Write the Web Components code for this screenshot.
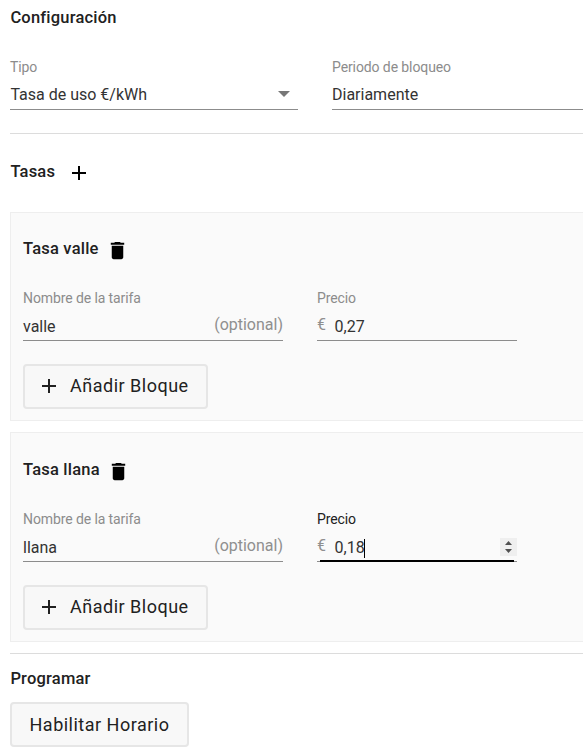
<!DOCTYPE html>
<html lang="es">
<head>
<meta charset="utf-8">
<title>Configuración</title>
<style>
body { margin: 0; background: #fff; color: #333; font: 16px/20px Roboto, "Liberation Sans", sans-serif; overflow: hidden; }
</style>
</head>
<body>
<tariff-page></tariff-page>
<script>
const define = (name, html) => customElements.define(name, class extends HTMLElement {
  connectedCallback() {
    if (this.shadowRoot) return;
    const t = document.createElement('template');
    t.innerHTML = html;
    this.attachShadow({ mode: 'open' }).append(t.content.cloneNode(true));
  }
});

define('ui-icon-plus', `<style>:host{display:block;width:24px;height:24px}svg{display:block}</style>
<svg width="24" height="24" viewBox="0 0 24 24"><path fill="currentColor" d="M19 13h-6v6h-2v-6H5v-2h6V5h2v6h6z"/></svg>`);

define('ui-icon-trash', `<style>:host{display:block;width:23px;height:23px;color:#000}svg{display:block}</style>
<svg width="23" height="23" viewBox="0 0 24 24"><path fill="currentColor" d="M6 19c0 1.100.9 2 2 2h8c1.100 0 2-.9 2-2V7H6v12zM19 4h-3.500l-1-1h-5l-1 1H5v2h14z"/></svg>`);

define('ui-heading', `<style>
:host{display:flex;align-items:flex-start;height:24px;font-weight:500;font-size:16.500px;line-height:20px;letter-spacing:.2px;white-space:nowrap;color:#212121;padding-left:var(--inset,0)}
::slotted([slot=action]){margin-left:var(--gap,12px);margin-top:var(--drop,0)}
</style><slot></slot><slot name="action"></slot>`);

define('ui-divider', `<style>:host{display:block;height:1px;background:#dcdcdc}</style>`);

define('ui-button', `<style>
:host{display:flex;width:max-content}
button{box-sizing:border-box;height:45px;width:var(--w);display:flex;align-items:center;justify-content:flex-start;margin:0;padding:0 0 var(--lift,2px) 17.500px;border:2px solid #e6e6e6;border-radius:4px;background:#f8f8f8;color:#212121;font:18px/24px Roboto,"Liberation Sans",sans-serif;letter-spacing:.5px;white-space:nowrap}
::slotted([slot=icon]){margin:0 9px 0 -5.500px}
</style><button type="button"><slot name="icon"></slot><slot></slot></button>`);

define('ui-field', `<style>
:host{display:flex;flex-direction:column;box-sizing:border-box;height:53px;min-width:0}
label{font-size:14px;line-height:20px;letter-spacing:-.1px;color:var(--label,#8c8c8c);white-space:nowrap}
.row{flex:1;display:flex;align-items:flex-end;border-bottom:1px solid #8c8c8c;position:relative;white-space:nowrap}
.value{display:flex;align-items:center;line-height:20px;padding-bottom:var(--vb,3px);flex:1}
::slotted([slot=prefix]),::slotted([slot=suffix]){color:#8f8f8f;padding-bottom:5px;line-height:20px}
::slotted([slot=prefix]){width:17.500px}
.focus{display:none;position:absolute;left:3px;right:3px;bottom:-1px;height:2px;background:#000}
:host([focused]){--label:#212121}
:host([focused]) .focus{display:block}
</style>
<label><slot name="label"></slot></label>
<div class="row"><slot name="prefix"></slot><div class="value"><slot></slot></div><slot name="suffix"></slot><i class="focus"></i></div>`);

define('ui-arrow', `<style>:host{display:block;padding:0 8px 13px 0}svg{display:block}</style>
<svg width="12" height="6" viewBox="0 0 12 6"><path fill="#777" d="M0 0h12L6 6z"/></svg>`);

define('ui-caret', `<style>:host{display:block;width:1px;height:19px;background:#000;margin-left:-1px}</style>`);

define('ui-spinner', `<style>:host{display:block;width:17px;height:18px;background:#efefef;margin-bottom:5px}svg{display:block}</style>
<svg width="17" height="18" viewBox="0 0 17 18"><path fill="#505050" d="M5 7l3.500-4L12 7zM5 11h7l-3.500 4z"/></svg>`);

define('tariff-card', `<style>
:host{display:block;box-sizing:border-box;height:209px;border:1px solid #eee;border-right:0;background:#fafafa;padding:26px 0 0 12px}
:host([shifted]){height:210px;padding-top:27px}
.fields{display:grid;grid-template-columns:260px 200px;column-gap:34px;margin-top:25px}
.add{margin-top:23px}
ui-heading{--gap:7px}
</style>
<ui-heading><slot name="title"></slot><ui-icon-trash slot="action"></ui-icon-trash></ui-heading>
<div class="fields"><slot></slot></div>
<ui-button class="add" style="--w:185px"><ui-icon-plus slot="icon"></ui-icon-plus>Añadir Bloque</ui-button>`);

define('tariff-page', `<style>
:host{display:block;padding:8px 0 0 10px}
ui-heading{--inset:.4px}
.top{display:grid;grid-template-columns:288px minmax(0,1fr);column-gap:34px;margin:25px 0 23px}
.top ui-field{--vb:4px}
.rates{margin-top:28px;--drop:-1px}
.cards{display:grid;gap:11px;margin-top:26px}
.program{margin-top:15px}
.schedule{margin-top:9px;--lift:0}
</style>
<ui-heading>Configuración</ui-heading>
<div class="top">
<ui-field><span slot="label">Tipo</span><span style="padding-left:.4px">Tasa de uso €/kWh</span><ui-arrow slot="suffix" style="padding-bottom:12px"></ui-arrow></ui-field>
<ui-field><span slot="label">Periodo de bloqueo</span>Diariamente</ui-field>
</div>
<ui-divider></ui-divider>
<ui-heading class="rates">Tasas<ui-icon-plus slot="action" style="color:#000"></ui-icon-plus></ui-heading>
<div class="cards">
<tariff-card><span slot="title">Tasa valle</span>
<ui-field><span slot="label">Nombre de la tarifa</span>valle<span slot="suffix">(optional)</span></ui-field>
<ui-field><span slot="label">Precio</span><span slot="prefix">€</span>0,27</ui-field>
</tariff-card>
<tariff-card shifted><span slot="title">Tasa llana</span>
<ui-field><span slot="label">Nombre de la tarifa</span>llana<span slot="suffix">(optional)</span></ui-field>
<ui-field focused><span slot="label">Precio</span><span slot="prefix">€</span>0,18<ui-caret></ui-caret><ui-spinner slot="suffix" style="padding:0"></ui-spinner></ui-field>
</tariff-card>
</div>
<ui-divider style="margin-top:11px"></ui-divider>
<ui-heading class="program">Programar</ui-heading>
<ui-button class="schedule" style="--w:179px">Habilitar Horario</ui-button>`);
</script>
</body>
</html>
